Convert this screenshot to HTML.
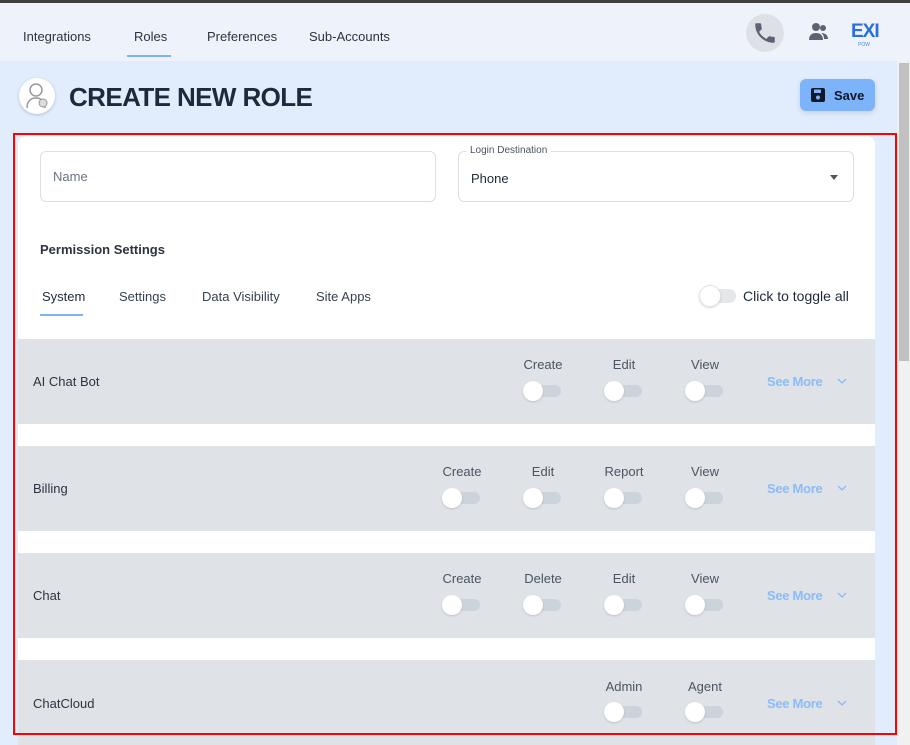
<!DOCTYPE html>
<html><head><style>
*{box-sizing:border-box;margin:0;padding:0}
body{width:910px;height:745px;overflow:hidden;background:#e1edfc;font-family:"Liberation Sans",sans-serif;position:relative;color:#374151}
.top{position:absolute;left:0;top:0;width:910px;height:3px;background:#3f3f3f}
.nav{position:absolute;left:0;top:3px;width:910px;height:58px;background:#eef2fa}
.nav span{position:absolute;top:26px;font-size:13px;color:#2d3340}
.abs{position:absolute}
.sb{position:absolute;left:897px;top:61px;width:13px;height:684px;background:#f1f1f1}
.sb div{position:absolute;left:2px;top:2px;width:10px;height:298px;background:#c1c1c1}
.card{position:absolute;left:18px;top:136px;width:857px;height:609px;background:#fff;border-radius:8px 8px 0 0}
.red{position:absolute;left:13px;top:133px;width:884px;height:602px;border:2px solid #f00}
.row{position:absolute;left:18px;width:857px;height:85px;background:#dfe2e7}
.row .t{position:absolute;left:15px;top:35px;font-size:13px;color:#2d3340}
.p{position:absolute;width:80px;text-align:center;font-size:13px;color:#4b5563;top:18px}
.tg{position:absolute;top:46px;width:36px;height:12px;background:#cdd3db;border-radius:6px}
.tg:before{content:"";position:absolute;left:-2px;top:-4px;width:20px;height:20px;border-radius:50%;background:#fff;box-shadow:0 1px 2px rgba(0,0,0,.15)}
.sm{position:absolute;left:749px;top:35px;font-size:13px;font-weight:bold;color:#8bbcf7;letter-spacing:-0.3px}
.sm svg{position:absolute;left:70px;top:4px}
</style></head><body>
<div class="top"></div>
<div class="nav">
<span style="left:23px">Integrations</span>
<span style="left:134px">Roles</span>
<div class="abs" style="left:127px;top:52px;width:44px;height:2px;background:#7fb2f3"></div>
<span style="left:207px">Preferences</span>
<span style="left:309px">Sub-Accounts</span>
<div class="abs" style="left:746px;top:11px;width:38px;height:38px;border-radius:50%;background:#dde1e7"></div>
<svg class="abs" style="left:752px;top:17px" width="26" height="26" viewBox="0 0 24 24"><path fill="#5b6372" d="M6.6 10.8c1.4 2.8 3.8 5.1 6.6 6.6l2.2-2.2c.3-.3.7-.4 1-.2 1.1.4 2.3.6 3.6.6.6 0 1 .4 1 1V20c0 .6-.4 1-1 1C10.6 21 3 13.4 3 4c0-.6.4-1 1-1h3.5c.6 0 1 .4 1 1 0 1.3.2 2.5.6 3.6.1.3 0 .7-.2 1l-2.3 2.2z"/></svg>
<svg class="abs" style="left:808px;top:19px" width="22" height="20" viewBox="0 0 22 20"><circle cx="8" cy="5" r="4" fill="#5b6372"/><circle cx="15" cy="6" r="3" fill="#5b6372"/><path d="M1 18c0-5 3-7 7-7s7 2 7 7z" fill="#5b6372"/><path d="M13 11c4 0 7 2 7 6h-4c0-3-1-5-3-6z" fill="#5b6372"/></svg>
<div class="abs" style="left:851px;top:18px;font-weight:bold;font-size:19px;color:#2b6ee0;letter-spacing:-1px">EXI</div>
<div class="abs" style="left:858px;top:39px;font-size:5px;color:#4a8ae8">POW</div>
</div>
<div class="sb"><div></div></div>
<div class="abs" style="left:19px;top:78px;width:36px;height:36px;border-radius:50%;background:#fff;box-shadow:0 1px 3px rgba(0,0,0,.2)"></div>
<svg class="abs" style="left:24px;top:81px" width="26" height="30" viewBox="0 0 26 30"><circle cx="12" cy="9" r="6" fill="none" stroke="#999" stroke-width="1.5"/><path d="M3 27c0-7 4-10 9-10s9 3 9 10" fill="none" stroke="#999" stroke-width="1.5"/><circle cx="19" cy="22" r="4" fill="#ddd" stroke="#999"/></svg>
<div class="abs" style="left:69px;top:82px;font-size:26px;font-weight:bold;color:#1f2937;letter-spacing:-0.6px">CREATE NEW ROLE</div>
<div class="abs" style="left:800px;top:79px;width:75px;height:32px;border-radius:6px;background:#7db3f8;box-shadow:0 2px 6px rgba(0,0,0,.12)"></div>
<svg class="abs" style="left:810px;top:87px" width="16" height="16" viewBox="0 0 16 16"><rect x="1" y="1" width="14" height="14" rx="2" fill="#111827"/><rect x="4" y="2.5" width="7" height="3.5" fill="#7db3f8"/><circle cx="8" cy="10.5" r="2" fill="#7db3f8"/></svg>
<div class="abs" style="left:834px;top:88px;font-size:13px;font-weight:bold;color:#111827">Save</div>
<div class="card"></div>
<div class="abs" style="left:40px;top:151px;width:396px;height:51px;border:1px solid #dcdfe4;border-radius:6px"></div>
<div class="abs" style="left:53px;top:169px;font-size:13px;color:#6b7280">Name</div>
<div class="abs" style="left:458px;top:151px;width:396px;height:51px;border:1px solid #dcdfe4;border-radius:6px"></div>
<div class="abs" style="left:466px;top:145px;padding:0 4px;background:#fff;font-size:10px;color:#4b5563">Login Destination</div>
<div class="abs" style="left:471px;top:171px;font-size:13px;color:#1f2937">Phone</div>
<div class="abs" style="left:830px;top:175px;border-left:4px solid transparent;border-right:4px solid transparent;border-top:5px solid #555"></div>
<div class="abs" style="left:40px;top:242px;font-size:13px;font-weight:bold;color:#2d3340">Permission Settings</div>
<div class="abs" style="left:42px;top:289px;font-size:13px;color:#1f2937">System</div>
<div class="abs" style="left:40px;top:314px;width:43px;height:2px;background:#7fb2f3"></div>
<div class="abs" style="left:119px;top:289px;font-size:13px;color:#374151">Settings</div>
<div class="abs" style="left:202px;top:289px;font-size:13px;color:#374151">Data Visibility</div>
<div class="abs" style="left:316px;top:289px;font-size:13px;color:#374151">Site Apps</div>
<div class="abs" style="left:700px;top:289px;width:36px;height:14px;background:#e5e7eb;border-radius:7px"></div>
<div class="abs" style="left:699px;top:285px;width:22px;height:22px;border-radius:50%;background:#fff;border:1px solid #e2e4e8;box-shadow:0 1px 2px rgba(0,0,0,.15)"></div>
<div class="abs" style="left:743px;top:288px;font-size:14px;color:#1f2937">Click to toggle all</div>

<div class="row" style="top:339px"><div class="t">AI Chat Bot</div>
<div class="p" style="left:485px">Create</div><div class="tg" style="left:507px"></div>
<div class="p" style="left:566px">Edit</div><div class="tg" style="left:588px"></div>
<div class="p" style="left:647px">View</div><div class="tg" style="left:669px"></div>
<div class="sm">See More<svg width="10" height="6" viewBox="0 0 10 6"><path d="M1 1l4 4 4-4" fill="none" stroke="#8bbcf7" stroke-width="1.3"/></svg></div></div>

<div class="row" style="top:446px"><div class="t">Billing</div>
<div class="p" style="left:404px">Create</div><div class="tg" style="left:426px"></div>
<div class="p" style="left:485px">Edit</div><div class="tg" style="left:507px"></div>
<div class="p" style="left:566px">Report</div><div class="tg" style="left:588px"></div>
<div class="p" style="left:647px">View</div><div class="tg" style="left:669px"></div>
<div class="sm">See More<svg width="10" height="6" viewBox="0 0 10 6"><path d="M1 1l4 4 4-4" fill="none" stroke="#8bbcf7" stroke-width="1.3"/></svg></div></div>

<div class="row" style="top:553px"><div class="t">Chat</div>
<div class="p" style="left:404px">Create</div><div class="tg" style="left:426px"></div>
<div class="p" style="left:485px">Delete</div><div class="tg" style="left:507px"></div>
<div class="p" style="left:566px">Edit</div><div class="tg" style="left:588px"></div>
<div class="p" style="left:647px">View</div><div class="tg" style="left:669px"></div>
<div class="sm">See More<svg width="10" height="6" viewBox="0 0 10 6"><path d="M1 1l4 4 4-4" fill="none" stroke="#8bbcf7" stroke-width="1.3"/></svg></div></div>

<div class="row" style="top:660px"><div class="t" style="top:36px">ChatCloud</div>
<div class="p" style="left:566px;top:19px">Admin</div><div class="tg" style="left:588px"></div>
<div class="p" style="left:647px;top:19px">Agent</div><div class="tg" style="left:669px"></div>
<div class="sm" style="top:36px">See More<svg width="10" height="6" viewBox="0 0 10 6"><path d="M1 1l4 4 4-4" fill="none" stroke="#8bbcf7" stroke-width="1.3"/></svg></div></div>

<div class="red"></div>
</body></html>
